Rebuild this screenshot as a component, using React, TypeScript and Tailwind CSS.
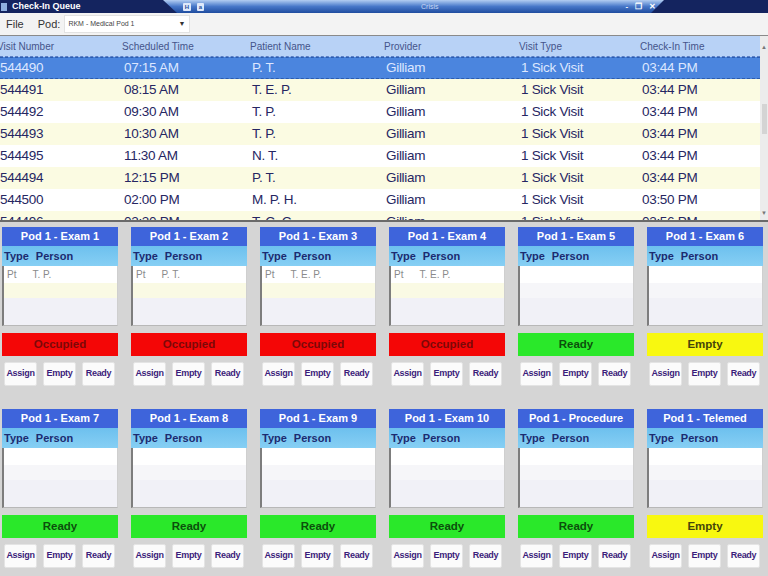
import React from 'react';

type Visit = {
  number: string;
  scheduled: string;
  patient: string;
  provider: string;
  type: string;
  checkIn: string;
};

type Room = {
  name: string;
  occupant?: { type: string; person: string };
  status: 'Occupied' | 'Ready' | 'Empty';
};

const visits: Visit[] = [
  { number: '544490', scheduled: '07:15 AM', patient: 'P. T.', provider: 'Gilliam', type: '1 Sick Visit', checkIn: '03:44 PM' },
  { number: '544491', scheduled: '08:15 AM', patient: 'T. E. P.', provider: 'Gilliam', type: '1 Sick Visit', checkIn: '03:44 PM' },
  { number: '544492', scheduled: '09:30 AM', patient: 'T. P.', provider: 'Gilliam', type: '1 Sick Visit', checkIn: '03:44 PM' },
  { number: '544493', scheduled: '10:30 AM', patient: 'T. P.', provider: 'Gilliam', type: '1 Sick Visit', checkIn: '03:44 PM' },
  { number: '544495', scheduled: '11:30 AM', patient: 'N. T.', provider: 'Gilliam', type: '1 Sick Visit', checkIn: '03:44 PM' },
  { number: '544494', scheduled: '12:15 PM', patient: 'P. T.', provider: 'Gilliam', type: '1 Sick Visit', checkIn: '03:44 PM' },
  { number: '544500', scheduled: '02:00 PM', patient: 'M. P. H.', provider: 'Gilliam', type: '1 Sick Visit', checkIn: '03:50 PM' },
  { number: '544496', scheduled: '02:30 PM', patient: 'T. C. C.', provider: 'Gilliam', type: '1 Sick Visit', checkIn: '03:56 PM' },
];

const rooms: Room[] = [
  { name: 'Pod 1 - Exam 1', occupant: { type: 'Pt', person: 'T. P.' }, status: 'Occupied' },
  { name: 'Pod 1 - Exam 2', occupant: { type: 'Pt', person: 'P. T.' }, status: 'Occupied' },
  { name: 'Pod 1 - Exam 3', occupant: { type: 'Pt', person: 'T. E. P.' }, status: 'Occupied' },
  { name: 'Pod 1 - Exam 4', occupant: { type: 'Pt', person: 'T. E. P.' }, status: 'Occupied' },
  { name: 'Pod 1 - Exam 5', status: 'Ready' },
  { name: 'Pod 1 - Exam 6', status: 'Empty' },
  { name: 'Pod 1 - Exam 7', status: 'Ready' },
  { name: 'Pod 1 - Exam 8', status: 'Ready' },
  { name: 'Pod 1 - Exam 9', status: 'Ready' },
  { name: 'Pod 1 - Exam 10', status: 'Ready' },
  { name: 'Pod 1 - Procedure', status: 'Ready' },
  { name: 'Pod 1 - Telemed', status: 'Empty' },
];

const statusStyles: Record<Room['status'], string> = {
  Occupied: 'bg-[#f40606] text-[#7c0808]',
  Ready: 'bg-[#2ae82a] text-[#0c4f0c]',
  Empty: 'bg-[#f8f810] text-[#45450a]',
};

const colWidths = ['w-[122px]', 'w-[128px]', 'w-[134px]', 'w-[135px]', 'w-[121px]', 'w-[120px]'];

function TitleBar() {
  return (
    <div className="flex h-[13px] bg-[#14245f]">
      <div className="flex w-[163px] items-center gap-[5px] pl-[1px]">
        <span className="h-[8px] w-[6px] bg-[#8fb0e0]" />
        <span className="text-[9px] font-bold leading-none text-white">Check-In Queue</span>
      </div>
      <div className="flex w-[501px] items-center bg-gradient-to-b from-[#b3cdf1] via-[#4777c8] to-[#1f4c9f] [clip-path:polygon(0_0,100%_0,calc(100%-13px)_100%,14px_100%)]">
        <div className="ml-[20px] flex gap-[6px]">
          <span className="flex h-[8px] w-[8px] items-center justify-center rounded-[1px] bg-[#dfe9fb] text-[6px] font-bold leading-none text-[#2a4f9a]">H</span>
          <span className="flex h-[8px] w-[7px] items-center justify-center rounded-[1px] bg-[#dfe9fb] text-[6px] font-bold leading-none text-[#2a4f9a]">a</span>
        </div>
        <span className="ml-[217px] text-[7px] leading-none text-[#c8d8f4]">Crisis</span>
        <div className="ml-[187px] flex items-center gap-[7px] text-[8px] font-bold leading-none text-white">
          <span>-</span>
          <span>&#x2750;</span>
          <span>&#x2715;</span>
        </div>
      </div>
      <div className="flex-1" />
    </div>
  );
}

function MenuBar() {
  return (
    <div className="flex h-[23px] items-center border-b border-[#8a8a8a] bg-[#f3f3f3] text-[11px] text-[#333]">
      <span className="ml-[6px]">File</span>
      <span className="ml-[14px]">Pod:</span>
      <div className="ml-[4px] flex h-[18px] w-[126px] items-center justify-between border border-[#e2e2e2] bg-white pl-[3px] pr-[4px]">
        <span className="text-[7px] text-[#444]">RKM - Medical Pod 1</span>
        <span className="text-[7px] text-[#333]">&#9660;</span>
      </div>
    </div>
  );
}

function VisitTable() {
  const headers = ['Visit Number', 'Scheduled Time', 'Patient Name', 'Provider', 'Visit Type', 'Check-In Time'];
  return (
    <div className="flex h-[186px] border-b-2 border-[#6a6a6a] bg-white">
      <div className="flex-1 overflow-hidden">
        <div className="flex h-[21px] items-center border-b border-dashed border-[#5b7fc6] bg-[#b8d2f6] text-[10px] text-[#45548a]">
          {headers.map((h, i) => (
            <div key={h} className={`${i === 0 ? '-ml-[3px] w-[125px]' : colWidths[i]} shrink-0`}>
              {h}
            </div>
          ))}
        </div>
        {visits.map((v, idx) => {
          const selected = idx === 0;
          const bg = selected
            ? 'bg-[#4b85de] text-[#dde7ff] border-y border-dashed border-[#2c5cae]'
            : idx % 2 === 1
              ? 'bg-[#fbfbe2] text-[#262662]'
              : 'bg-white text-[#262662]';
          const cells = [v.number, v.scheduled, v.patient, v.provider, v.type, v.checkIn];
          return (
            <div key={v.number} className={`flex h-[22px] items-center text-[13.5px] tracking-[-0.3px] ${bg}`}>
              {cells.map((c, i) => (
                <div key={i} className={`${colWidths[i]} shrink-0 ${i === 0 ? 'pl-0' : 'pl-[2px]'}`}>
                  {c}
                </div>
              ))}
            </div>
          );
        })}
      </div>
      {/* vertical scrollbar */}
      <div className="flex w-[8px] flex-col items-center bg-[#ececec] text-[6px] leading-none text-[#777]">
        <span className="mt-[8px]">&#9650;</span>
        <span className="mt-[54px] h-[30px] w-[5px] bg-[#d4d4d4]" />
        <span className="mt-auto mb-[4px]">&#9660;</span>
      </div>
    </div>
  );
}

function RoomCard({ room }: { room: Room }) {
  return (
    <div className="flex w-[116px] flex-col">
      <div className="flex h-[19px] items-center justify-center bg-[#3e64db] text-[11px] font-bold text-white">
        {room.name}
      </div>
      <div className="flex h-[20px] items-center gap-[7px] bg-gradient-to-b from-[#6dc0ee] to-[#86cff4] pl-[2px] text-[11px] font-bold text-[#1c2b70]">
        <span>Type</span>
        <span>Person</span>
      </div>
      <div className="flex h-[60px] flex-col border-l-2 border-b border-r border-l-[#7d7d7d] border-b-[#b8b8b8] border-r-[#cfcfcf] bg-white">
        <div className="flex h-[17px] items-center gap-[16px] pl-[3px] text-[10px] text-[#8a8a8a]">
          {room.occupant && (
            <>
              <span>{room.occupant.type}</span>
              <span>{room.occupant.person}</span>
            </>
          )}
        </div>
        <div className={`h-[15px] ${room.occupant ? 'bg-[#fafae4]' : 'bg-[#f6f6f9]'}`} />
        <div className="flex-1 bg-[#f1f1f7]" />
      </div>
      <div className={`mt-[7px] flex h-[23px] items-center justify-center text-[11.5px] font-bold ${statusStyles[room.status]}`}>
        {room.status}
      </div>
      <div className="mt-[6px] flex gap-[6px] pl-[2px]">
        {['Assign', 'Empty', 'Ready'].map((b) => (
          <div
            key={b}
            className="flex h-[24px] w-[33px] items-center justify-center rounded-[2px] border border-[#e4e4e4] bg-[#fbfbfb] text-[9px] font-bold tracking-[-0.3px] text-[#3b1d7a]"
          >
            {b}
          </div>
        ))}
      </div>
    </div>
  );
}

export default function App() {
  return (
    <div className="h-[576px] w-[768px] overflow-hidden bg-[#d5d5d5] font-['Liberation_Sans',Arial,sans-serif]">
      <TitleBar />
      <MenuBar />
      <VisitTable />
      {/* room board */}
      <div className="grid grid-cols-[repeat(6,116px)] gap-x-[13px] gap-y-[23px] pl-[2px] pt-[5px]">
        {rooms.map((r) => (
          <RoomCard key={r.name} room={r} />
        ))}
      </div>
    </div>
  );
}
